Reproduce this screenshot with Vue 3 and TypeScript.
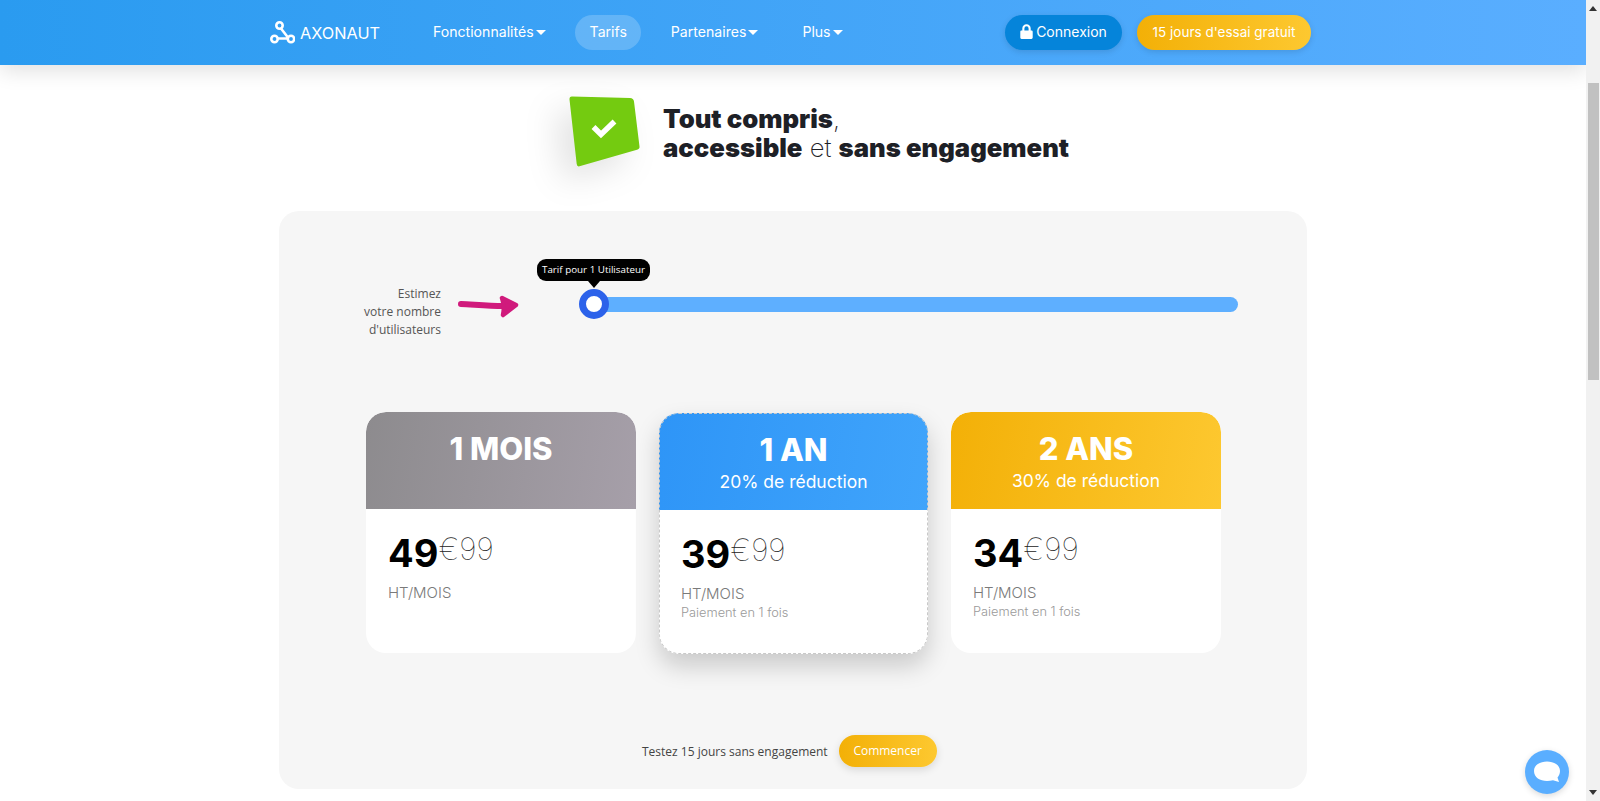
<script setup lang="ts">
interface Plan {
  id: string
  title: string
  discount?: string
  price: string
  note?: string
}

const navItems = [
  { label: 'Fonctionnalités', caret: true, active: false },
  { label: 'Tarifs', caret: false, active: true },
  { label: 'Partenaires', caret: true, active: false },
  { label: 'Plus', caret: true, active: false }
]

const plans: Plan[] = [
  { id: 'month', title: '1 MOIS', price: '49' },
  { id: 'year', title: '1 AN', discount: '20% de réduction', price: '39', note: 'Paiement en 1 fois' },
  { id: 'two', title: '2 ANS', discount: '30% de réduction', price: '34', note: 'Paiement en 1 fois' }
]
</script>

<template>
  <div class="page">
    <div class="content">
      <header class="topbar">
        <a class="logo">
          <svg width="25" height="25" viewBox="0 0 25 25" fill="none" stroke="#fff" stroke-width="2.6">
            <circle cx="9.500" cy="5.500" r="3.200" />
            <circle cx="4.500" cy="19" r="3.200" />
            <circle cx="21" cy="19" r="3.200" />
            <path d="M11 8.500 L17.600 17 M7.800 18.500 H17.600" />
          </svg>
          <span>AXONAUT</span>
        </a>
        <nav class="nav">
          <a v-for="item in navItems" :key="item.label" class="nav-item" :class="{ active: item.active }">
            {{ item.label }}<i v-if="item.caret" class="caret"></i>
          </a>
        </nav>
        <a class="btn btn-login">
          <svg width="13" height="15" viewBox="0 0 13 15" fill="#fff">
            <path d="M1.500 6.500h.8V4.400a4.200 4.200 0 0 1 8.400 0v2.100h.8c.6 0 1.200.6 1.200 1.200v5.900c0 .7-.6 1.400-1.200 1.400H1.500C.8 15 .3 14.300 .3 13.600V7.700c0-.6.5-1.200 1.200-1.200zm2.900 0h4.200V4.400a2.100 2.100 0 0 0-4.200 0z" />
          </svg>
          Connexion
        </a>
        <a class="btn btn-trial">15 jours d'essai gratuit</a>
      </header>

      <section class="intro">
        <div class="badge">
          <svg width="72" height="74" viewBox="0 0 72 74">
            <path d="M3 0.500 L61 2 Q64.500 2.200 65 5.500 L70.500 50.500 Q70.800 53 68 53.800 L10.500 70.300 Q8 71 7.700 68 L0.500 3.500 Q0.300 0.400 3 0.500Z" fill="#74cb10" />
            <path d="M24.500 31 L32 38.500 L45.500 25.500" fill="none" stroke="#fff" stroke-width="5.500" />
          </svg>
        </div>
        <h1 class="headline">
          <b>Tout compris</b>,<br />
          <b>accessible</b> et <b>sans engagement</b>
        </h1>
      </section>

      <main class="panel">
        <div class="estimate">
          <p class="estimate-label">Estimez<br />votre nombre<br />d'utilisateurs</p>
          <svg class="arrow" width="62" height="26" viewBox="0 0 62 26" fill="none" stroke="#d01a7c" stroke-linecap="round" stroke-linejoin="round">
            <path d="M3 10 C15 10.500 30 12 45 12" stroke-width="6" />
            <path d="M44 4 L58 11 L45 21 Q47 12 44 4Z" fill="#d01a7c" stroke-width="4.500" />
          </svg>
          <div class="slider">
            <div class="track"></div>
            <div class="thumb"></div>
            <div class="tip">Tarif pour 1 Utilisateur</div>
          </div>
        </div>

        <div class="plans">
          <article v-for="plan in plans" :key="plan.id" class="plan" :class="'plan-' + plan.id">
            <div class="plan-head">
              <div class="plan-title">{{ plan.title }}</div>
              <div v-if="plan.discount" class="plan-discount">{{ plan.discount }}</div>
            </div>
            <div class="plan-body">
              <div class="price"><strong>{{ plan.price }}</strong><span>€99</span></div>
              <div class="unit">HT/MOIS</div>
              <div v-if="plan.note" class="note">{{ plan.note }}</div>
            </div>
          </article>
        </div>

        <div class="cta">
          <span>Testez 15 jours sans engagement</span>
          <a class="btn-start">Commencer</a>
        </div>
      </main>
    </div>

    <aside class="scrollbar">
      <i class="arrow-up"></i>
      <div class="scroll-thumb"></div>
      <i class="arrow-down"></i>
    </aside>

    <button class="chat">
      <svg width="28" height="24" viewBox="0 0 28 24">
        <path d="M14 1.500 C21 1.500 27 5 27 11 C27 14 25.800 16 24.500 17.500 L26 22 L20 20.300 C18 20.900 16 21 14 21 C7 21 1 17.500 1 11 C1 5 7 1.500 14 1.500Z" fill="#fff" />
      </svg>
    </button>
  </div>
</template>

<style>
html,
body {
  margin: 0;
  overflow: hidden;
  background: #fff;
}
</style>

<style scoped>
.page {
  width: 1600px;
  height: 801px;
  display: flex;
  overflow: hidden;
  font-family: Inter, "Noto Sans", sans-serif;
}

.content {
  width: 1586px;
  flex-shrink: 0;
}

/* header */
.topbar {
  height: 65px;
  box-sizing: border-box;
  display: flex;
  align-items: center;
  padding: 0 275px 0 270px;
  background: linear-gradient(90deg, #2a9bf0 0%, #5aaeff 100%);
  box-shadow: 0 6px 20px rgba(0, 0, 0, 0.12);
  position: relative;
}

.logo {
  display: flex;
  align-items: center;
  gap: 5px;
  width: 148.500px;
  color: #fff;
  font-size: 16.300px;
  font-weight: 400;
}

.nav {
  display: flex;
  gap: 15px;
}

.nav-item {
  height: 35px;
  box-sizing: border-box;
  padding: 0 14.500px 2px;
  display: flex;
  align-items: center;
  border-radius: 18px;
  color: #fff;
  font-size: 14.100px;
}

.nav-item.active {
  background: rgba(255, 255, 255, 0.2);
}

.caret {
  margin-left: 2px;
  margin-top: 2px;
  border-left: 5px solid transparent;
  border-right: 5px solid transparent;
  border-top: 5px solid #fff;
}

.btn {
  height: 35px;
  box-sizing: border-box;
  display: flex;
  align-items: center;
  justify-content: center;
  padding-bottom: 2px;
  border-radius: 18px;
  color: #fff;
  font-size: 13.500px;
  box-shadow: 0 2px 6px rgba(0, 0, 0, 0.12);
}

.btn-login {
  width: 117px;
  gap: 3px;
  margin-left: auto;
  background: #0584da;
  font-size: 14px;
}

.btn-trial {
  width: 174px;
  margin-left: 15px;
  background: linear-gradient(90deg, #f3b007 0%, #fdc830 100%);
}

/* intro */
.intro {
  display: flex;
  align-items: center;
  margin: 31px 0 0 569px;
  height: 74px;
}

.badge {
  filter: drop-shadow(-14px 14px 16px rgba(0, 0, 0, 0.11));
  height: 74px;
}

.headline {
  margin: 0 0 0 22px;
  font-size: 25.700px;
  line-height: 29px;
  font-weight: 200;
  color: #1d2026;
}

.headline b {
  font-weight: 900;
}

/* panel */
.panel {
  width: 1028px;
  height: 578px;
  box-sizing: border-box;
  margin: 41px 0 0 279px;
  padding-top: 57px;
  background: #f6f6f6;
  border-radius: 20px;
}

.estimate {
  display: flex;
  align-items: center;
  height: 72px;
  font-family: "Open Sans", sans-serif;
}

.estimate-label {
  width: 162px;
  margin: 15px 0 0;
  text-align: right;
  color: #555;
  font-size: 12px;
  line-height: 18px;
}

.arrow {
  margin: 6px 0 0 17px;
}

.slider {
  position: relative;
  width: 659px;
  height: 30px;
  margin-left: 59px;
  display: flex;
  align-items: center;
}

.track {
  width: 100%;
  height: 15px;
  margin-left: 15px;
  border-radius: 0 8px 8px 0;
  background: #5eafff;
}

.thumb {
  position: absolute;
  left: 0;
  top: 0;
  width: 16px;
  height: 16px;
  border: 7px solid #2c62ea;
  border-radius: 50%;
  background: #fff;
}

.tip {
  position: absolute;
  left: -42px;
  top: -30px;
  width: 113px;
  height: 22px;
  line-height: 22px;
  text-align: center;
  border-radius: 9px;
  background: #000;
  color: #fff;
  font-size: 9.800px;
}

.tip::after {
  content: "";
  position: absolute;
  left: 50%;
  top: 100%;
  margin-left: -6px;
  border-left: 6px solid transparent;
  border-right: 6px solid transparent;
  border-top: 7px solid #000;
}

/* plans */
.plans {
  display: flex;
  gap: 23px;
  margin: 72px 0 0 87px;
  align-items: flex-start;
}

.plan {
  width: 270px;
  height: 241px;
  border-radius: 20px;
  overflow: hidden;
  background: #fff;
}

.plan-year {
  width: 269px;
  margin-top: 1px;
  box-shadow: 0 12px 24px rgba(0, 0, 0, 0.18);
  overflow: visible;
  outline: 1px dashed #c9c9c9;
  outline-offset: -1px;
}

.plan-head {
  height: 97px;
  box-sizing: border-box;
  padding-top: 19px;
  text-align: center;
  color: #fff;
  border-radius: 20px 20px 0 0;
}

.plan-month .plan-head {
  background: linear-gradient(100deg, #8d8b8e 0%, #a69fa9 100%);
}

.plan-year .plan-head {
  background: linear-gradient(100deg, #2e95f7 0%, #40a4fb 100%);
}

.plan-two .plan-head {
  background: linear-gradient(100deg, #f3b007 0%, #fdc830 100%);
}

.plan-title {
  font-size: 31px;
  line-height: 36px;
  font-weight: 800;
}

.plan-discount {
  font-size: 17.500px;
  line-height: 22px;
  margin-top: 3px;
}

.plan-body {
  padding: 20px 22px;
}

.price {
  display: flex;
  align-items: flex-start;
  height: 48px;
  color: #000;
}

.price strong {
  font-size: 38px;
  line-height: 48px;
  font-weight: 700;
}

.price span {
  font-size: 30.500px;
  line-height: 40px;
  font-weight: 100;
  color: #222;
}

.unit {
  margin-top: 6px;
  font-size: 15px;
  line-height: 20px;
  color: #7a7a7a;
  font-weight: 300;
}

.note {
  margin-top: 1px;
  font-size: 12.800px;
  line-height: 16px;
  color: #9a9a9a;
  font-weight: 300;
}

/* bottom call to action */
.cta {
  display: flex;
  align-items: center;
  gap: 11px;
  margin: 81px 0 0 363px;
  height: 32px;
  font-family: "Open Sans", sans-serif;
  font-size: 12px;
  color: #444;
}

.btn-start {
  width: 98px;
  height: 32px;
  line-height: 32px;
  text-align: center;
  border-radius: 16px;
  color: #fff;
  background: linear-gradient(90deg, #f3b007 0%, #fdc830 100%);
  box-shadow: 0 3px 8px rgba(0, 0, 0, 0.12);
}

/* fake scrollbar */
.scrollbar {
  width: 14px;
  height: 801px;
  background: #f1f1f1;
  display: flex;
  flex-direction: column;
  align-items: center;
  position: relative;
}

.scroll-thumb {
  width: 11px;
  height: 297px;
  margin-top: 72px;
  background: #c1c1c1;
}

.arrow-up {
  margin-top: 6px;
  border-left: 4px solid transparent;
  border-right: 4px solid transparent;
  border-bottom: 5px solid #333;
}

.arrow-down {
  margin-top: auto;
  margin-bottom: 6px;
  border-left: 4px solid transparent;
  border-right: 4px solid transparent;
  border-top: 5px solid #333;
}

.chat {
  position: fixed;
  left: 1525px;
  bottom: 7px;
  width: 44px;
  height: 44px;
  padding: 0;
  border: none;
  border-radius: 50%;
  background: #5aaeff;
  box-shadow: 0 2px 6px rgba(0, 0, 0, 0.15);
  display: flex;
  align-items: center;
  justify-content: center;
}
</style>
